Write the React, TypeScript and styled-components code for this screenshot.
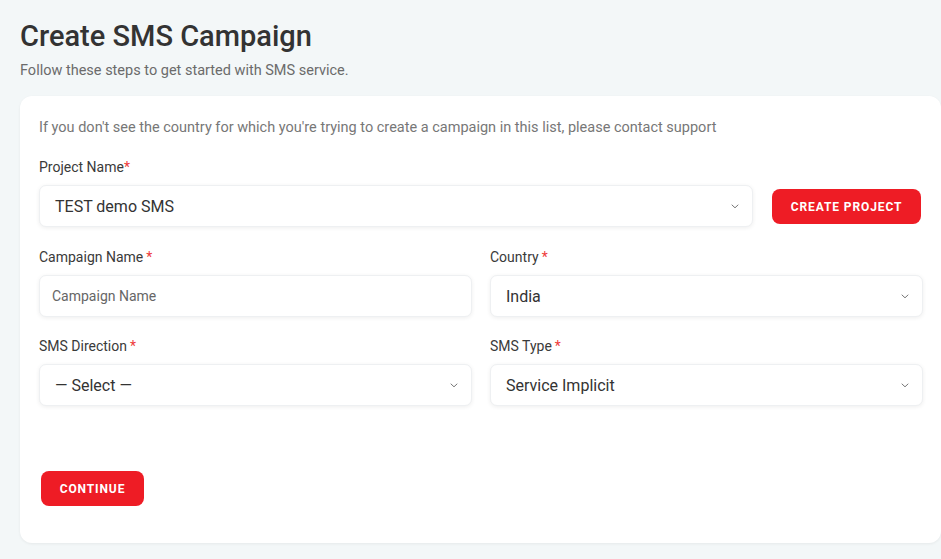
import React from "react";
import styled, { createGlobalStyle } from "styled-components";

const Global = createGlobalStyle`
  html, body { margin: 0; padding: 0; background: #f3f7f8; }
  body { font-family: Roboto, "Liberation Sans", sans-serif; color: #333; overflow: hidden; }
  * { box-sizing: border-box; }
`;

const Page = styled.div`
  width: 941px;
  height: 559px;
  padding: 18px 0 0 20px;
  background: #f3f7f8;
`;

const Title = styled.h1`
  margin: 0;
  font-size: 29px;
  line-height: 36px;
  font-weight: 500;
  color: #333;
`;

const Subtitle = styled.p`
  margin: 7px 0 0;
  font-size: 14.5px;
  line-height: 20px;
  color: #6b6b6b;
`;

const Card = styled.div`
  margin-top: 15px;
  background: #fff;
  border-radius: 12px;
  box-shadow: 0 1px 3px rgba(0, 0, 0, 0.06);
  padding: 22px 18px 37px 19px;
  height: 447px;
  display: flex;
  flex-direction: column;
`;

const Info = styled.p`
  margin: 0 0 19px;
  font-size: 14.5px;
  line-height: 20px;
  color: #777;
`;

const Row = styled.div<{ $cols: string; $gap: number; $mb: number }>`
  display: grid;
  grid-template-columns: ${(p) => p.$cols};
  column-gap: ${(p) => p.$gap}px;
  align-items: end;
  margin-bottom: ${(p) => p.$mb}px;
`;

const Field = styled.div`
  display: flex;
  flex-direction: column;
`;

const Label = styled.label`
  font-size: 14px;
  line-height: 20px;
  color: #3a3a3a;
  margin-bottom: 8px;
`;

const Star = styled.span<{ $tight?: boolean }>`
  color: #ee3a3a;
  margin-left: ${(p) => (p.$tight ? 0 : 3)}px;
`;

const Box = styled.div<{ $placeholder?: boolean }>`
  height: 42px;
  border: 1px solid #eef0f2;
  border-radius: 7px;
  box-shadow: 0 1px 4px rgba(0, 0, 0, 0.07);
  background: #fff;
  display: flex;
  align-items: center;
  justify-content: space-between;
  padding: 0 13px 0 ${(p) => (p.$placeholder ? 12 : 15)}px;
  font-size: ${(p) => (p.$placeholder ? 14 : 16)}px;
  color: ${(p) => (p.$placeholder ? "#666" : "#333")};
`;

const RedButton = styled.button<{ $w: number }>`
  width: ${(p) => p.$w}px;
  height: 35px;
  border: none;
  border-radius: 8px;
  background: #ee1c25;
  color: #fff;
  font-family: Roboto, "Liberation Sans", sans-serif;
  font-weight: 700;
  font-size: 12px;
  letter-spacing: 0.9px;
  text-transform: uppercase;
  padding: 0;
  cursor: pointer;
`;

const ProjectButtonWrap = styled.div`
  padding-bottom: 3px;
  padding-right: 2px;
`;

const Spacer = styled.div`
  flex: 1;
`;

const ContinueWrap = styled.div`
  padding-left: 2px;
`;

const Chevron = () => (
  <svg width="8" height="5" viewBox="0 0 8 5" fill="none">
    <path d="M1 1 L4 3.8 L7 1" stroke="#777" strokeWidth="1" strokeLinecap="round" strokeLinejoin="round" />
  </svg>
);

const Select = ({ value }: { value: string }) => (
  <Box>
    <span>{value}</span>
    <Chevron />
  </Box>
);

export default function App() {
  return (
    <>
      <Global />
      <Page>
        <Title>Create SMS Campaign</Title>
        <Subtitle>Follow these steps to get started with SMS service.</Subtitle>
        <Card>
          <Info>
            If you don't see the country for which you're trying to create a campaign in this list, please contact support
          </Info>
          <Row $cols="1fr 151px" $gap={19} $mb={20}>
            <Field>
              <Label>
                Project Name<Star $tight>*</Star>
              </Label>
              <Select value="TEST demo SMS" />
            </Field>
            <ProjectButtonWrap>
              <RedButton $w={149}>Create Project</RedButton>
            </ProjectButtonWrap>
          </Row>
          <Row $cols="1fr 1fr" $gap={18} $mb={19}>
            <Field>
              <Label>
                Campaign Name<Star>*</Star>
              </Label>
              <Box $placeholder>
                <span>Campaign Name</span>
              </Box>
            </Field>
            <Field>
              <Label>
                Country<Star>*</Star>
              </Label>
              <Select value="India" />
            </Field>
          </Row>
          <Row $cols="1fr 1fr" $gap={18} $mb={0}>
            <Field>
              <Label>
                SMS Direction<Star>*</Star>
              </Label>
              <Select value="— Select —" />
            </Field>
            <Field>
              <Label>
                SMS Type<Star>*</Star>
              </Label>
              <Select value="Service Implicit" />
            </Field>
          </Row>
          <Spacer />
          <ContinueWrap>
            <RedButton $w={103}>Continue</RedButton>
          </ContinueWrap>
        </Card>
      </Page>
    </>
  );
}
